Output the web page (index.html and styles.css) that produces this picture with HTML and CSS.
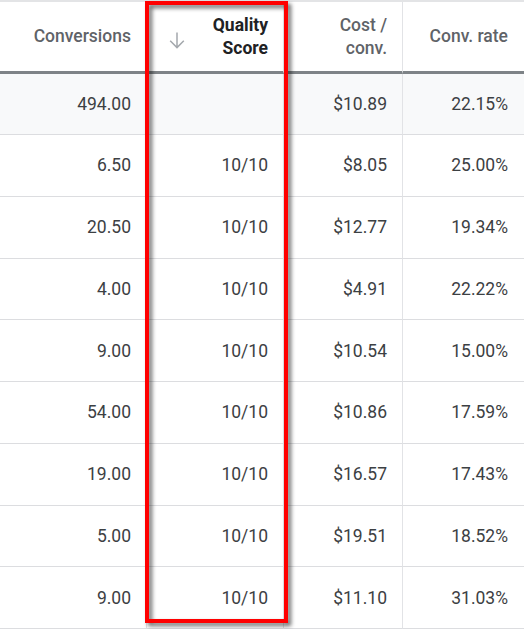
FILE: index.html
```html
<!DOCTYPE html>
<html>
<head>
<meta charset="utf-8">
<link rel="stylesheet" href="styles.css">
</head>
<body>
<div class="wrap">
  <div class="table">
    <div class="cell head">Conversions</div>
    <div class="cell head sorted">
      <svg class="arrow" viewBox="0 0 24 24" width="24" height="24"><path d="M12 4.5V19.5M5.2 12.8L12 19.6L18.8 12.8" fill="none" stroke="#a4a8ad" stroke-width="1.5"/></svg>
      <span>Quality<br>Score</span>
    </div>
    <div class="cell head">Cost /<br>conv.</div>
    <div class="cell head">Conv. rate</div>

    <div class="cell sum">494.00</div>
    <div class="cell sum"></div>
    <div class="cell sum">$10.89</div>
    <div class="cell sum">22.15%</div>

    <div class="cell">6.50</div><div class="cell">10/10</div><div class="cell">$8.05</div><div class="cell">25.00%</div>
    <div class="cell">20.50</div><div class="cell">10/10</div><div class="cell">$12.77</div><div class="cell">19.34%</div>
    <div class="cell">4.00</div><div class="cell">10/10</div><div class="cell">$4.91</div><div class="cell">22.22%</div>
    <div class="cell">9.00</div><div class="cell">10/10</div><div class="cell">$10.54</div><div class="cell">15.00%</div>
    <div class="cell">54.00</div><div class="cell">10/10</div><div class="cell">$10.86</div><div class="cell">17.59%</div>
    <div class="cell">19.00</div><div class="cell">10/10</div><div class="cell">$16.57</div><div class="cell">17.43%</div>
    <div class="cell">5.00</div><div class="cell">10/10</div><div class="cell">$19.51</div><div class="cell">18.52%</div>
    <div class="cell">9.00</div><div class="cell">10/10</div><div class="cell">$11.10</div><div class="cell">31.03%</div>
  </div>
  <div class="highlight"></div>
</div>
</body>
</html>
```
FILE: styles.css
```css
html, body {
  margin: 0;
  padding: 0;
  background: #ffffff;
}
.wrap {
  position: relative;
  width: 524px;
  height: 629px;
  overflow: hidden;
}
.table {
  display: grid;
  grid-template-columns: 147px 137px 119px 121px;
  grid-template-rows: 74px 61px repeat(8, 61.75px);
  font-family: Roboto, "Liberation Sans", sans-serif;
  font-size: 17.5px;
  color: #3c4043;
}
.cell {
  box-sizing: border-box;
  display: flex;
  align-items: center;
  justify-content: flex-end;
  text-align: right;
  padding-right: 15px;
  border-bottom: 1px solid #dcdde0;
  border-right: 1px solid #e2e3e6;
}
.cell:nth-child(4n) {
  border-right: none;
  padding-right: 16px;
}
.head {
  border-top: 2px solid #e3e4e6;
  border-bottom: 3px solid #7e8387;
  color: #5f6368;
  font-weight: 500;
  line-height: 23px;
}
.head.sorted {
  justify-content: space-between;
  padding-left: 18px;
  color: #202124;
  font-weight: 700;
}
.arrow {
  display: block;
  margin-top: 6px;
}
.sum {
  background: #f8f9fa;
}
.highlight {
  position: absolute;
  left: 145px;
  top: 1px;
  width: 143px;
  height: 622px;
  box-sizing: border-box;
  border: 4px solid #ff0000;
  filter: drop-shadow(3px 3px 2px rgba(0, 0, 0, 0.6));
}
```
